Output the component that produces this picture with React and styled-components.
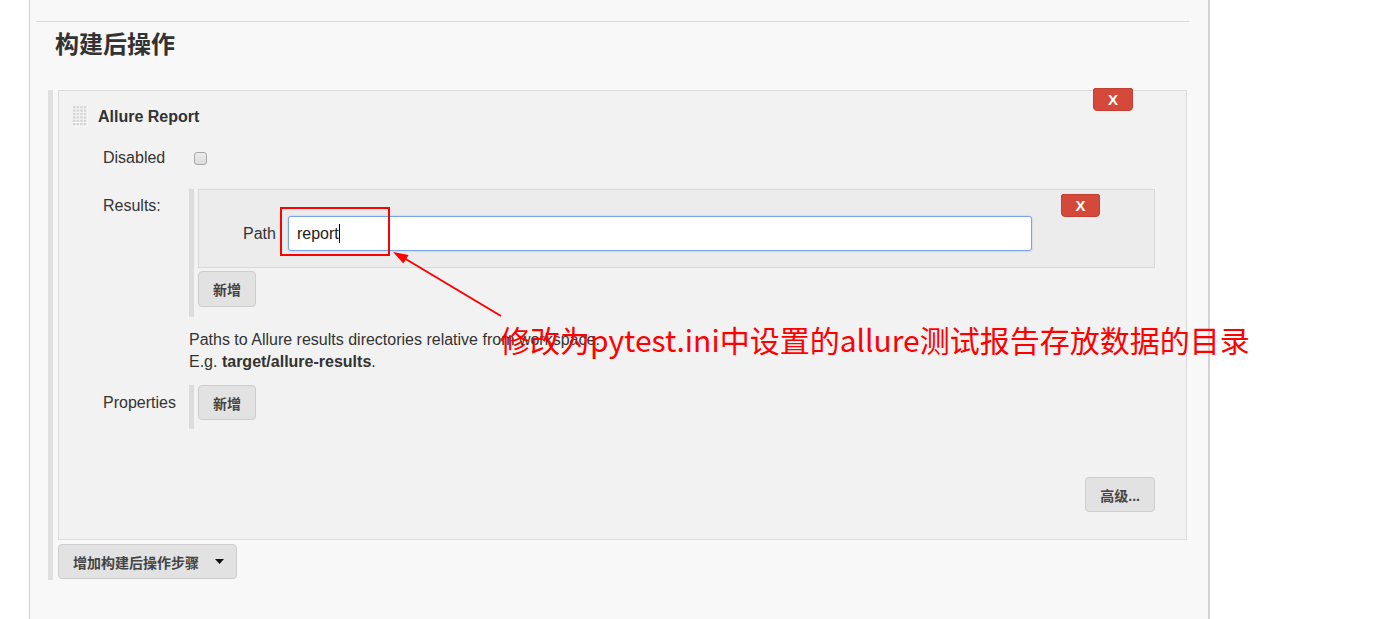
import React from 'react'
import styled, { createGlobalStyle } from 'styled-components'

const GlobalStyle = createGlobalStyle`
  body {
    margin: 0;
    background: #fff;
    font-family: "Liberation Sans", Arial, "Noto Sans CJK SC", sans-serif;
    color: #333;
  }
`

const Page = styled.div`
  position: relative;
  width: 1373px;
  height: 619px;
  overflow: hidden;
  padding-left: 29px;
  box-sizing: border-box;
`

const Panel = styled.div`
  width: 1181px;
  height: 100%;
  box-sizing: border-box;
  background: #f8f8f8;
  border-left: 1px solid #d3d3d3;
  border-right: 2px solid #d3d3d3;
  padding-top: 21px;
`

const Divider = styled.div`
  height: 1px;
  background: #dcdcdc;
  margin: 0 19px 0 6px;
`

const Heading = styled.h2`
  margin: 11px 0 0 25px;
  font-size: 24px;
  line-height: 24px;
  font-weight: bold;
  color: #333;
`

const Section = styled.div`
  margin: 33px 0 0 18px;
  width: 1139px;
  box-sizing: border-box;
  border-left: 5px solid #e0e0e0;
  padding: 0 0 1px 5px;
`

const Box = styled.div`
  position: relative;
  height: 450px;
  box-sizing: border-box;
  background: #f2f2f2;
  border: 1px solid #dcdcdc;
`

const DeleteButton = styled.button`
  position: absolute;
  top: ${p => p.$top}px;
  right: ${p => p.$right}px;
  width: ${p => p.$w}px;
  height: 23px;
  padding: 0;
  border: 1px solid #c23f31;
  border-radius: 2px 2px 4px 4px;
  background: #d5493a;
  color: #fff;
  font-family: "Liberation Sans", Arial, sans-serif;
  font-weight: bold;
  font-size: 15px;
  line-height: 21px;
`

const Header = styled.div`
  display: flex;
  align-items: center;
  gap: 10px;
  padding: 15px 0 0 14px;
  height: 21px;
`

const Title = styled.div`
  font-size: 16px;
  font-weight: bold;
  color: #333;
`

const Form = styled.div`
  display: grid;
  grid-template-columns: 86px 1fr;
  padding: 0 31px 0 44px;
`

const Label = styled.div`
  font-size: 16px;
  line-height: 24px;
  margin-top: ${p => p.$top || 0}px;
  color: #333;
`

const Cell = styled.div`
  margin-top: ${p => p.$top || 0}px;
  display: flex;
  align-items: center;
  min-height: 24px;
`

const Checkbox = styled.span`
  display: inline-block;
  width: 11px;
  height: 11px;
  margin-left: 5px;
  border: 1px solid #a8a8a8;
  border-radius: 3px;
  background: linear-gradient(#ececec, #dcdcdc);
`

const Repeat = styled.div`
  flex: 1;
  border-left: 5px solid #dcdcdc;
  padding: 0 0 ${p => p.$bottom}px 4px;
`

const Item = styled.div`
  position: relative;
  background: #ececec;
  border: 1px solid #d8d8d8;
  padding: 26px 0 16px 44px;
  display: flex;
  align-items: center;
  gap: 12px;
`

const FieldLabel = styled.span`
  font-size: 16px;
  color: #333;
`

const Input = styled.div`
  width: 744px;
  height: 35px;
  box-sizing: border-box;
  border: 1px solid #78a2ea;
  border-radius: 3px;
  background: #fff;
  box-shadow: 0 0 2px rgba(100, 150, 235, 0.5);
  padding-left: 8px;
  display: flex;
  align-items: center;
  font-size: 16px;
  color: #222;
`

const Caret = styled.span`
  display: inline-block;
  width: 1px;
  height: 19px;
  background: #000;
`

const Button = styled.button`
  margin-top: ${p => p.$top || 0}px;
  height: ${p => p.$h || 35}px;
  padding: 0 ${p => p.$pr || 14}px 0 ${p => p.$pl || 14}px;
  border: 1px solid #cdcdcd;
  border-radius: 4px;
  background: #e2e2e2;
  color: #444;
  font-family: "Liberation Sans", Arial, "Noto Sans CJK SC", sans-serif;
  font-size: 14px;
  font-weight: bold;
  display: inline-flex;
  align-items: center;
  gap: 16px;
`

const Help = styled.div`
  grid-column: 2;
  margin-top: 12px;
  font-size: 16px;
  line-height: 22px;
  color: #333;
`

const Footer = styled.div`
  display: flex;
  justify-content: flex-end;
  padding-right: 31px;
  margin-top: 48px;
`

const Mark = styled.div`
  position: absolute;
  left: 280px;
  top: 207px;
  width: 110px;
  height: 49px;
  box-sizing: border-box;
  border: 2px solid #f00;
`

const Overlay = styled.svg`
  position: absolute;
  left: 0;
  top: 0;
  pointer-events: none;
`

const Note = styled.div`
  position: absolute;
  left: 500px;
  top: 324px;
  font-family: "Noto Sans CJK SC", sans-serif;
  font-size: 30px;
  line-height: 30px;
  color: #f00;
  white-space: nowrap;
`

const Handle = () => {
  const dots = []
  for (let r = 0; r < 6; r++) {
    for (let c = 0; c < 4; c++) {
      dots.push(<rect key={`${r}-${c}`} x={c * 3.6} y={r * 3.4} width="2.6" height="2.4" fill="#d6d6d6" />)
    }
  }
  return (
    <svg width="15" height="21" viewBox="0 0 15 21">
      <rect width="15" height="21" fill="#f7f7f7" />
      {dots}
    </svg>
  )
}

export default function App() {
  return (
    <Page>
      <GlobalStyle />
      <Panel>
        <Divider />
        <Heading>构建后操作</Heading>
        <Section>
          <Box>
            <DeleteButton $top={-3} $right={53} $w={40}>X</DeleteButton>
            <Header>
              <Handle />
              <Title>Allure Report</Title>
            </Header>
            <Form>
              <Label $top={19}>Disabled</Label>
              <Cell $top={19}><Checkbox /></Cell>

              <Label $top={24}>Results:</Label>
              <Cell $top={19}>
                <Repeat $bottom={10}>
                  <Item>
                    <DeleteButton $top={4} $right={54} $w={39}>X</DeleteButton>
                    <FieldLabel>Path</FieldLabel>
                    <Input>report<Caret /></Input>
                  </Item>
                  <Button $top={3} $h={36}>新增</Button>
                </Repeat>
              </Cell>

              <Help>
                Paths to Allure results directories relative from workspace.<br />
                E.g. <b>target/allure-results</b>.
              </Help>

              <Label $top={18}>Properties</Label>
              <Cell $top={12}>
                <Repeat $bottom={9}>
                  <Button>新增</Button>
                </Repeat>
              </Cell>
            </Form>
            <Footer>
              <Button>高级...</Button>
            </Footer>
          </Box>
          <Button $top={4} $pl={14} $pr={12}>
            增加构建后操作步骤
            <svg width="9" height="5" viewBox="0 0 9 5"><path d="M0 0h9L4.5 5z" fill="#111" /></svg>
          </Button>
        </Section>
      </Panel>

      <Mark />
      <Overlay width="1373" height="619">
        <line x1="501" y1="316" x2="404" y2="258" stroke="#f00" strokeWidth="2" />
        <path d="M393 252 L408.6 254.9 L403.4 263.5 Z" fill="#f00" />
      </Overlay>
      <Note>修改为pytest.ini中设置的allure测试报告存放数据的目录</Note>
    </Page>
  )
}
